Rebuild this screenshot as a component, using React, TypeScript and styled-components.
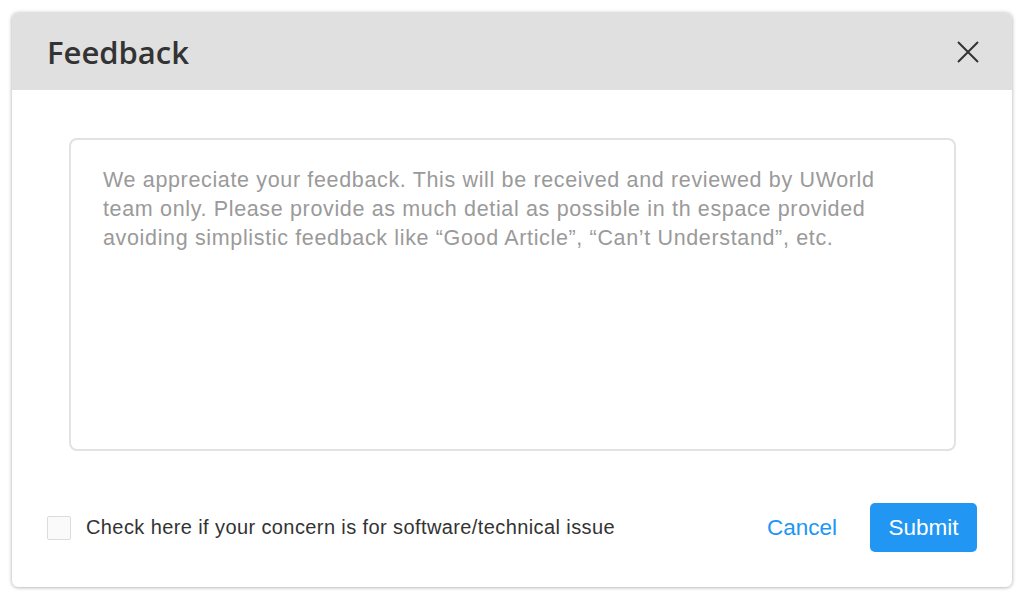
import styled, { createGlobalStyle } from "styled-components";

const GlobalStyle = createGlobalStyle`
    html, body {
        margin: 0;
        padding: 0;
        background: #ffffff;
    }
    * {
        box-sizing: border-box;
    }
`;

const Page = styled.div`
    padding: 13px 12px;
`;

const Dialog = styled.div`
    width: 1000px;
    height: 574px;
    background: #fff;
    border-radius: 6px;
    box-shadow: 0 0 4px rgba(0,0,0,0.25), 0 1px 3px rgba(0,0,0,0.12);
    display: flex;
    flex-direction: column;
    overflow: hidden;
`;

const Header = styled.div`
    height: 77px;
    background: #e0e0e0;
    display: flex;
    align-items: center;
    justify-content: space-between;
    padding: 0 32px 0 35px;
`;

const Title = styled.h2`
    margin: 0;
    font-family: "Open Sans", "Noto Sans", sans-serif;
    font-weight: 600;
    font-size: 31px;
    color: #333;
`;

const CloseButton = styled.button`
    border: none;
    background: transparent;
    padding: 0;
    width: 24px;
    height: 24px;
    display: flex;
    align-items: center;
    justify-content: center;
    cursor: pointer;
`;

const Body = styled.div`
    flex: 1;
    padding: 48px 56px 0 57px;
`;

const TextArea = styled.textarea`
    display: block;
    width: 100%;
    height: 313px;
    border: 2px solid #e2e2e2;
    border-radius: 8px;
    padding: 26px 30px 26px 32px;
    resize: none;
    font-family: "Liberation Sans", Arial, sans-serif;
    font-size: 21.5px;
    letter-spacing: 0.65px;
    line-height: 29px;
    color: #333;
    outline: none;
    &::placeholder {
        color: #9a9a9a;
    }
`;

const Footer = styled.div`
    display: flex;
    align-items: center;
    justify-content: space-between;
    padding: 52px 35px 35px 35px;
`;

const CheckLabel = styled.label`
    display: flex;
    align-items: center;
    gap: 15px;
    font-family: "Liberation Sans", Arial, sans-serif;
    font-size: 20px;
    letter-spacing: 0.4px;
    color: #333;
    cursor: pointer;
`;

const CheckBox = styled.span`
    width: 24px;
    height: 24px;
    border: 1.5px solid #dcdcdc;
    border-radius: 2px;
    background: #fafafa;
`;

const Actions = styled.div`
    display: flex;
    align-items: center;
    gap: 33px;
`;

const TextButton = styled.button`
    border: none;
    background: transparent;
    font-family: "Liberation Sans", Arial, sans-serif;
    font-size: 22.5px;
    color: #2196f3;
    padding: 0;
    cursor: pointer;
`;

const PrimaryButton = styled.button`
    border: none;
    background: #2196f3;
    color: #fff;
    font-family: "Liberation Sans", Arial, sans-serif;
    font-size: 22.5px;
    height: 49px;
    width: 107px;
    border-radius: 5px;
    cursor: pointer;
`;

const placeholder =
    "We appreciate your feedback. This will be received and reviewed by UWorld\n" +
    "team only. Please provide as much detial as possible in th espace provided\n" +
    "avoiding simplistic feedback like \u201CGood Article\u201D, \u201CCan\u2019t Understand\u201D, etc.";

const App = () => {
    return <>
        <GlobalStyle />
        <Page>
            <Dialog>
                <Header>
                    <Title>Feedback</Title>
                    <CloseButton aria-label="Close">
                        <svg width="22" height="22" viewBox="0 0 22 22">
                            <path d="M1 1 L21 21 M21 1 L1 21" stroke="#333" strokeWidth="2" />
                        </svg>
                    </CloseButton>
                </Header>
                <Body>
                    <TextArea placeholder={placeholder} />
                </Body>
                <Footer>
                    <CheckLabel>
                        <CheckBox />
                        Check here if your concern is for software/technical issue
                    </CheckLabel>
                    <Actions>
                        <TextButton>Cancel</TextButton>
                        <PrimaryButton>Submit</PrimaryButton>
                    </Actions>
                </Footer>
            </Dialog>
        </Page>
    </>
}

export default App;
